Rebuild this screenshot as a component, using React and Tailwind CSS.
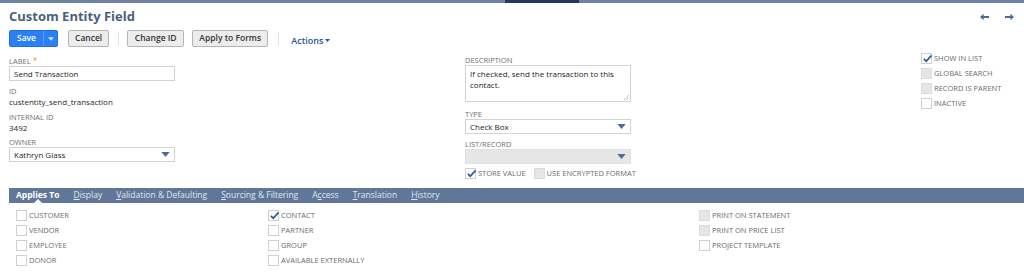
import React from "react";

const Box = ({ checked, disabled }) => (
  <span
    className={`relative inline-block w-[11px] h-[11px] border shrink-0 ${
      disabled ? "bg-[#e6e6e6] border-[#dcdcdc]" : "bg-white border-[#d0d0d0]"
    }`}
  >
    {checked && (
      <svg viewBox="0 0 12 12" className="absolute left-[0px] top-[-1px] w-[11px] h-[11px]">
        <path d="M2 6.5 L4.6 9 L10.5 2.5" fill="none" stroke="#2d5ea8" strokeWidth="2" />
      </svg>
    )}
  </span>
);

const Check = ({ label, checked, disabled, className = "" }) => (
  <div className={`flex items-center gap-[2px] h-[15px] whitespace-nowrap ${className}`}>
    <Box checked={checked} disabled={disabled} />
    <span className="text-[7.5px] uppercase text-[#6b6b6b] leading-none">{label}</span>
  </div>
);

const Label = ({ children, className = "" }) => (
  <div className={`text-[7.5px] uppercase text-[#6f6f6f] leading-[10px] ${className}`}>{children}</div>
);

const Caret = () => (
  <svg viewBox="0 0 10 6" className="w-[9px] h-[5px]">
    <path d="M0 0 L10 0 L5 6 Z" fill="#4d6a9b" />
  </svg>
);

const Select = ({ value, gray }) => (
  <div
    className={`w-[166px] h-[15px] border flex items-center justify-between px-[4px] ${
      gray ? "bg-[#e6e6e6] border-[#e0e0e0]" : "bg-white border-[#d3d3d3]"
    }`}
  >
    <span className="text-[8px] text-[#262626]">{value}</span>
    <Caret />
  </div>
);

const Btn = ({ children, className = "" }) => (
  <div className={`h-[17px] px-[6px] flex items-center rounded-[2px] border border-[#b5b5b5] bg-[#ececec] text-[8.5px] font-semibold text-[#333] ${className}`}>
    {children}
  </div>
);

const Tab = ({ first, rest, active, pre = "" }) => (
  <div className={`relative h-full flex items-center text-[8.5px] ${active ? "font-bold text-white" : "text-[#e1e6ee]"}`}>
    <span>
      {pre}
      <span className={active ? "" : "underline"}>{first}</span>
      {rest}
    </span>
    {active && (
      <span className="absolute left-1/2 -translate-x-1/2 bottom-0 w-0 h-0 border-l-[4px] border-r-[4px] border-b-[4px] border-l-transparent border-r-transparent border-b-white" />
    )}
  </div>
);

export default function App() {
  return (
    <div className="w-[1024px] h-[279px] bg-white overflow-hidden" style={{ fontFamily: '"Open Sans", "Noto Sans", sans-serif' }}>
      <div className="h-[3px] bg-[#6e82a6] flex">
        <div className="w-[505px]" />
        <div className="w-[74px] bg-[#263859]" />
      </div>
      <div className="flex items-center justify-between pl-[9px] pr-[10px] mt-[4px] h-[18px]">
        <div className="text-[13px] font-bold text-[#4d5f7a] leading-none">Custom Entity Field</div>
        <div className="flex items-center gap-[16px] text-[#4d6a9b] mt-[2px]">
          <svg viewBox="0 0 10 8" className="w-[9px] h-[8px]"><path d="M0 4 L4 0.5 L4 3 L10 3 L10 5 L4 5 L4 7.5 Z" fill="#4d6a9b" /></svg>
          <svg viewBox="0 0 10 8" className="w-[9px] h-[8px]"><path d="M10 4 L6 0.5 L6 3 L0 3 L0 5 L6 5 L6 7.5 Z" fill="#4d6a9b" /></svg>
        </div>
      </div>
      <div className="flex items-center pl-[9px] mt-[5px] h-[17px]">
        <div className="flex h-[17px] rounded-[2px] bg-[#2b80f5] border border-[#1f6fe0] text-white text-[8.5px] font-semibold">
          <div className="w-[33px] flex items-center justify-center">Save</div>
          <div className="w-px bg-[#5f9cf2]" />
          <div className="w-[13px] flex items-center justify-center">
            <svg viewBox="0 0 10 6" className="w-[6px] h-[4px]"><path d="M0 0 L10 0 L5 6 Z" fill="#cfe0fb" /></svg>
          </div>
        </div>
        <div className="ml-[10px]"><Btn>Cancel</Btn></div>
        <div className="ml-[9px] w-px h-[14px] bg-[#e0e0e0]" />
        <div className="ml-[8px]"><Btn className="w-[57px] justify-center">Change ID</Btn></div>
        <div className="ml-[8px]"><Btn className="w-[76px] justify-center">Apply to Forms</Btn></div>
        <div className="ml-[10px] w-px h-[14px] bg-[#e0e0e0]" />
        <div className="ml-[12px] mt-[4px] flex items-center gap-[2px] text-[9px] font-semibold text-[#255599]">
          Actions
          <svg viewBox="0 0 10 6" className="w-[5px] h-[3px]"><path d="M0 0 L10 0 L5 6 Z" fill="#255599" /></svg>
        </div>
      </div>

      <div className="flex pl-[9px] mt-[9px] h-[130px]">
        <div className="w-[166px]">
          <Label>
            Label <span className="text-[#e8a33a] text-[9px]">*</span>
          </Label>
          <div className="w-[166px] h-[15px] border border-[#d3d3d3] flex items-center px-[4px] text-[8px] text-[#262626]">Send Transaction</div>
          <Label className="mt-[5px]">ID</Label>
          <div className="text-[8px] text-[#262626] leading-[12px]">custentity_send_transaction</div>
          <Label className="mt-[4px]">Internal ID</Label>
          <div className="text-[8px] text-[#262626] leading-[12px]">3492</div>
          <Label className="mt-[3px]">Owner</Label>
          <Select value="Kathryn Glass" />
        </div>

        <div className="w-[166px] ml-[290px] -mt-[1px]">
          <Label>Description</Label>
          <div className="relative w-[166px] h-[37px] border border-[#d3d3d3] px-[4px] pt-[2px] text-[8px] leading-[11px] text-[#262626]">
            If checked, send the transaction to this contact.
            <svg viewBox="0 0 6 6" className="absolute right-[1px] bottom-[1px] w-[5px] h-[5px]">
              <path d="M6 0 L0 6 M6 3 L3 6" stroke="#999" strokeWidth="0.8" />
            </svg>
          </div>
          <Label className="mt-[7px]">Type</Label>
          <Select value="Check Box" />
          <Label className="mt-[5px]">List/Record</Label>
          <Select value="" gray />
          <div className="flex items-center mt-[2px]">
            <Check label="Store Value" checked />
            <Check label="Use Encrypted Format" disabled className="ml-[8px]" />
          </div>
        </div>

        <div className="ml-[290px] -mt-[5px]">
          <Check label="Show in List" checked />
          <Check label="Global Search" disabled />
          <Check label="Record is Parent" disabled />
          <Check label="Inactive" />
        </div>
      </div>

      <div className="ml-[9px] mt-[2px] h-[15px] bg-[#607799] flex items-center pl-[7px] gap-[14px]">
        <Tab active first="Applies To" rest="" />
        <Tab first="D" rest="isplay" />
        <Tab first="V" rest="alidation & Defaulting" />
        <Tab first="S" rest="ourcing & Filtering" />
        <Tab pre="A" first="c" rest="cess" />
        <Tab first="T" rest="ranslation" />
        <Tab first="H" rest="istory" />
      </div>

      <div className="flex pl-[16px] mt-[5px]">
        <div className="w-[252px]">
          <Check label="Customer" />
          <Check label="Vendor" />
          <Check label="Employee" />
          <Check label="Donor" />
        </div>
        <div className="w-[431px]">
          <Check label="Contact" checked />
          <Check label="Partner" />
          <Check label="Group" />
          <Check label="Available Externally" />
        </div>
        <div>
          <Check label="Print on Statement" disabled />
          <Check label="Print on Price List" disabled />
          <Check label="Project Template" />
        </div>
      </div>
    </div>
  );
}
